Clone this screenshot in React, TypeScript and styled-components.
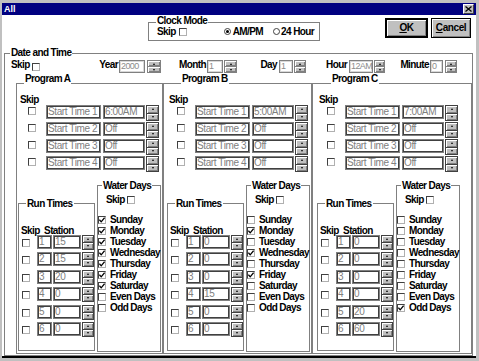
import React from "react";
import styled, { createGlobalStyle } from "styled-components";

const FONT = `"Liberation Sans", Arial, sans-serif`;

const GlobalStyle = createGlobalStyle`
  * { box-sizing: border-box; }
  html, body { margin: 0; padding: 0; background: #c0c0c0; }
  body { font-family: ${FONT}; font-size: 10px; }
`;

const Window = styled.div`
  width: 479px;
  height: 361px;
  background: #c0c0c0;
  padding: 3px 3px 3px 2px;
  display: flex;
  flex-direction: column;
  overflow: hidden;
`;

const TitleBar = styled.div`
  height: 12px;
  flex: none;
  background: #000080;
  color: #fff;
  display: flex;
  align-items: center;
  justify-content: space-between;
  padding: 0 2px 0 2px;
`;

const TitleText = styled.span`
  font: bold 9px/12px ${FONT};
`;

const CloseBox = styled.div`
  width: 11px;
  height: 10px;
  background: #c0c0c0;
  border: 1px solid;
  border-color: #fff #404040 #404040 #fff;
  display: flex;
  align-items: center;
  justify-content: center;
`;

const Client = styled.div`
  flex: 1;
  min-height: 0;
  background: #fff;
  border-bottom: 2px solid #000;
  display: flex;
  flex-direction: column;
`;

const Bold = styled.span<{ $lh?: number; $ml?: number; $w?: number; $right?: boolean }>`
  flex: none;
  display: inline-block;
  font: bold 10px/${(p) => p.$lh ?? 10}px ${FONT};
  letter-spacing: -0.6px;
  color: #000;
  white-space: pre;
  margin-left: ${(p) => p.$ml ?? 0}px;
  ${(p) => (p.$w ? `width: ${p.$w}px;` : "")}
  text-align: ${(p) => (p.$right ? "right" : "left")};
`;

const Group = styled.div`
  position: relative;
  border: 1px solid #808080;
`;

const Legend = styled.span<{ $top: number; $left: number }>`
  position: absolute;
  top: ${(p) => p.$top}px;
  left: ${(p) => p.$left}px;
  background: #fff;
  padding: 0 1px;
  font: bold 10px/10px ${FONT};
  letter-spacing: -0.6px;
  white-space: nowrap;
  color: #000;
`;

/* ---------- top row ---------- */

const TopRow = styled.div`
  height: 38px;
  flex: none;
  display: flex;
  align-items: flex-start;
`;

const ClockGroup = styled(Group)`
  margin: 7px 0 0 146px;
  width: 172px;
  height: 19px;
  display: flex;
  align-items: center;
  padding-left: 8px;
`;

const RadioDot = styled.span<{ $on?: boolean; $ml: number }>`
  flex: none;
  width: 7px;
  height: 7px;
  margin-left: ${(p) => p.$ml}px;
  border-radius: 50%;
  border: 1px solid #404040;
  background: #fff;
  display: flex;
  align-items: center;
  justify-content: center;
  &::after {
    content: "";
    width: 3px;
    height: 3px;
    border-radius: 50%;
    background: ${(p) => (p.$on ? "#000" : "transparent")};
  }
`;

const ButtonBar = styled.div`
  margin: 3px 5px 0 auto;
  display: flex;
  gap: 3px;
`;

const Button = styled.div<{ $w: number; $default?: boolean }>`
  width: ${(p) => p.$w}px;
  height: 20px;
  background: #c0c0c0;
  border: ${(p) => (p.$default ? 2 : 1)}px solid #000;
  box-shadow: inset 1px 1px #fff, inset -1px -1px #808080, inset -2px -2px #c0c0c0;
  display: flex;
  align-items: center;
  justify-content: center;
  font: bold 10px/10px ${FONT};
  letter-spacing: -0.4px;
  color: #000;
`;

const Under = styled.span`
  text-decoration: underline;
`;

/* ---------- common controls ---------- */

const CheckSquare = styled.span<{ $ml?: number; $mt?: number }>`
  flex: none;
  width: 8px;
  height: 8px;
  margin-left: ${(p) => p.$ml ?? 0}px;
  margin-top: ${(p) => p.$mt ?? 0}px;
  border: 1px solid;
  border-color: #404040 #b0b0b0 #b0b0b0 #404040;
  background: #fff;
  display: flex;
  align-items: center;
  justify-content: center;
`;

const CheckBox = ({ on, ml, mt }: { on?: boolean; ml?: number; mt?: number }) => (
  <CheckSquare $ml={ml} $mt={mt}>
    {on && (
      <svg width="6" height="6" viewBox="0 0 6 6">
        <polyline points="0.4,2.6 2.2,4.8 5.6,0.6" fill="none" stroke="#000" strokeWidth="1.3" />
      </svg>
    )}
  </CheckSquare>
);

const TextBox = styled.div<{ $w: number; $h: number; $ml?: number; $light?: boolean }>`
  flex: none;
  width: ${(p) => p.$w}px;
  height: ${(p) => p.$h}px;
  margin-left: ${(p) => p.$ml ?? 0}px;
  border: 1px solid #808080;
  box-shadow: inset 0 0 0 1px ${(p) => (p.$light ? "#d8d8d8" : "#404040")};
  padding-left: 1px;
  font: ${(p) => (p.$light ? 9 : 10)}px/${(p) => p.$h - 2}px ${FONT};
  letter-spacing: ${(p) => (p.$light ? -0.6 : -0.4)}px;
  color: ${(p) => (p.$light ? "#8c8c8c" : "#808080")};
  white-space: nowrap;
  overflow: hidden;
`;

const SpinBody = styled.div<{ $w: number; $h: number; $ml: number; $light?: boolean }>`
  flex: none;
  width: ${(p) => p.$w}px;
  height: ${(p) => p.$h}px;
  margin-left: ${(p) => p.$ml}px;
  display: flex;
  flex-direction: column;
  gap: 1px;
  background: ${(p) => (p.$light ? "#808080" : "#404040")};
  border: 1px solid ${(p) => (p.$light ? "#808080" : "#404040")};
`;

const SpinHalf = styled.div<{ $down?: boolean }>`
  flex: 1;
  background: #c0c0c0;
  box-shadow: inset 1px 1px #fff, inset -1px -1px #808080;
  display: flex;
  align-items: center;
  justify-content: center;
  &::after {
    content: "";
    width: 0;
    height: 0;
    border-left: 1.5px solid transparent;
    border-right: 1.5px solid transparent;
    ${(p) => (p.$down ? "border-top" : "border-bottom")}: 2px solid #000;
  }
`;

const Spinner = ({ w, h, ml = 1, light }: { w: number; h: number; ml?: number; light?: boolean }) => (
  <SpinBody $w={w} $h={h} $ml={ml} $light={light}>
    <SpinHalf />
    <SpinHalf $down />
  </SpinBody>
);

/* ---------- date and time ---------- */

const DateTimeGroup = styled(Group)`
  flex: 1;
  min-height: 0;
  margin: 0 3px 0 2px;
  padding: 6px 0 1px 6px;
  display: flex;
  flex-direction: column;
`;

const DTRow = styled.div`
  height: 13px;
  flex: none;
  display: flex;
  align-items: flex-start;
`;

const Field = styled.div<{ $ml: number }>`
  display: flex;
  align-items: flex-start;
  margin-left: ${(p) => p.$ml}px;
`;

const dtFields = [
  { label: "Year", value: "2000", ml: 50, lw: 28, iml: 1, iw: 26, sml: 2, sw: 14 },
  { label: "Month", value: "1", ml: 10, lw: 35, iml: 1, iw: 16, sml: 1, sw: 13 },
  { label: "Day", value: "1", ml: 10, lw: 30, iml: 2, iw: 14, sml: 1, sw: 12 },
  { label: "Hour", value: "12AM", ml: 10, lw: 31, iml: 2, iw: 24, sml: 1, sw: 11 },
  { label: "Minute", value: "0", ml: 9, lw: 35, iml: 1, iw: 13, sml: 2, sw: 12 },
];

/* ---------- programs ---------- */

const ProgramsRow = styled.div`
  flex: 1;
  min-height: 0;
  margin: 10px 0 0 5px;
  display: flex;
`;

const Program = styled(Group)<{ $w?: number; $pl: number }>`
  ${(p) => (p.$w ? `width: ${p.$w}px; flex: none;` : "flex: 1;")}
  padding: 10px 1px 1px ${(p) => p.$pl}px;
  display: flex;
  flex-direction: column;
`;

const StartList = styled.div`
  display: flex;
  flex-direction: column;
  gap: 1px;
`;

const StartRow = styled.div`
  height: 16px;
  display: flex;
  align-items: flex-start;
`;

const Bottom = styled.div`
  flex: 1;
  min-height: 0;
  margin-top: 13px;
  display: flex;
`;

const RunTimes = styled(Group)`
  width: 77px;
  flex: none;
  margin: 18px 0 1px 0;
  padding-top: 23px;
  display: flex;
  flex-direction: column;
`;

const StationList = styled.div`
  display: flex;
  flex-direction: column;
  gap: 2.4px;
`;

const StationRow = styled.div`
  height: 15px;
  display: flex;
  align-items: flex-start;
`;

const WaterDays = styled(Group)`
  width: 64px;
  flex: none;
  margin-left: 2px;
  padding-top: 9px;
  display: flex;
  flex-direction: column;
`;

const WDSkipRow = styled.div`
  height: 10px;
  margin-left: 8px;
  display: flex;
  align-items: flex-start;
`;

const DayList = styled.div`
  margin-top: 9px;
  display: flex;
  flex-direction: column;
`;

const DayRow = styled.div`
  height: 11px;
  display: flex;
  align-items: flex-start;
`;

const DAYS = ["Sunday", "Monday", "Tuesday", "Wednesday", "Thursday", "Friday", "Saturday", "Even Days", "Odd Days"];

type Prog = {
  name: string;
  width?: number;
  pl: number;
  legendLeft: number;
  starts: string[];
  stations: number[];
  days: number[];
};

const programs: Prog[] = [
  {
    name: "Program A",
    width: 147,
    pl: 1,
    legendLeft: 7,
    starts: ["6:00AM", "Off", "Off", "Off"],
    stations: [15, 15, 20, 0, 0, 0],
    days: [1, 1, 1, 1, 1, 1, 1, 0, 0],
  },
  {
    name: "Program B",
    width: 149,
    pl: 3,
    legendLeft: 17,
    starts: ["5:00AM", "Off", "Off", "Off"],
    stations: [0, 0, 0, 15, 0, 0],
    days: [0, 1, 0, 1, 0, 1, 0, 0, 0],
  },
  {
    name: "Program C",
    pl: 4,
    legendLeft: 18,
    starts: ["7:00AM", "Off", "Off", "Off"],
    stations: [0, 0, 0, 0, 20, 60],
    days: [0, 0, 0, 0, 0, 0, 0, 0, 1],
  },
];

const ProgramBox = ({ p }: { p: Prog }) => (
  <Program $w={p.width} $pl={p.pl}>
    <Legend $top={-10} $left={p.legendLeft}>
      {p.name}
    </Legend>
    <Bold $lh={11} $ml={2}>
      Skip
    </Bold>
    <StartList>
      {p.starts.map((s, i) => (
        <StartRow key={i}>
          <CheckBox ml={10} mt={2} />
          <TextBox $w={55} $h={14} $ml={10}>
            Start Time {i + 1}
          </TextBox>
          <TextBox $w={42} $h={14} $ml={2}>
            {s}
          </TextBox>
          <Spinner w={13} h={16} />
        </StartRow>
      ))}
    </StartList>
    <Bottom>
      <RunTimes>
        <Legend $top={-5} $left={7}>
          Run Times
        </Legend>
        <Bold $lh={8} $ml={2}>
          {"Skip  Station"}
        </Bold>
        <StationList>
          {p.stations.map((v, i) => (
            <StationRow key={i}>
              <CheckBox ml={3} mt={4} />
              <TextBox $w={15} $h={14} $ml={7}>
                {i + 1}
              </TextBox>
              <TextBox $w={28} $h={14} $ml={1}>
                {v}
              </TextBox>
              <Spinner w={12} h={15} />
            </StationRow>
          ))}
        </StationList>
      </RunTimes>
      <WaterDays>
        <Legend $top={-5} $left={4}>
          Water Days
        </Legend>
        <WDSkipRow>
          <Bold>Skip</Bold>
          <CheckBox ml={2} mt={1} />
        </WDSkipRow>
        <DayList>
          {DAYS.map((d, i) => (
            <DayRow key={d}>
              <CheckBox on={!!p.days[i]} mt={1.5} />
              <Bold $lh={11} $ml={4}>
                {d}
              </Bold>
            </DayRow>
          ))}
        </DayList>
      </WaterDays>
    </Bottom>
  </Program>
);

export default function App() {
  return (
    <>
      <GlobalStyle />
      <Window>
        <TitleBar>
          <TitleText>All</TitleText>
          <CloseBox>
            <svg width="7" height="6" viewBox="0 0 7 6">
              <path d="M0.5 0.5 L6.5 5.5 M6.5 0.5 L0.5 5.5" stroke="#000" strokeWidth="1.3" />
            </svg>
          </CloseBox>
        </TitleBar>
        <Client>
          <TopRow>
            <ClockGroup>
              <Legend $top={-7} $left={7}>
                Clock Mode
              </Legend>
              <Bold>Skip</Bold>
              <CheckBox ml={3} />
              <RadioDot $on $ml={37} />
              <Bold $ml={2}>AM/PM</Bold>
              <RadioDot $ml={10} />
              <Bold $ml={1}>24 Hour</Bold>
            </ClockGroup>
            <ButtonBar>
              <Button $w={43} $default>
                <span>
                  <Under>O</Under>K
                </span>
              </Button>
              <Button $w={40}>
                <span>
                  <Under>C</Under>ancel
                </span>
              </Button>
            </ButtonBar>
          </TopRow>
          <DateTimeGroup>
            <Legend $top={-6} $left={5}>
              Date and Time
            </Legend>
            <DTRow>
              <Bold $w={21}>Skip</Bold>
              <CheckBox mt={3} />
              {dtFields.map((f) => (
                <Field key={f.label} $ml={f.ml}>
                  <Bold $w={f.lw} $right>
                    {f.label}
                  </Bold>
                  <TextBox $w={f.iw} $h={13} $ml={f.iml} $light>
                    {f.value}
                  </TextBox>
                  <Spinner w={f.sw} h={13} ml={f.sml} light />
                </Field>
              ))}
            </DTRow>
            <ProgramsRow>
              {programs.map((p) => (
                <ProgramBox key={p.name} p={p} />
              ))}
            </ProgramsRow>
          </DateTimeGroup>
        </Client>
      </Window>
    </>
  );
}
